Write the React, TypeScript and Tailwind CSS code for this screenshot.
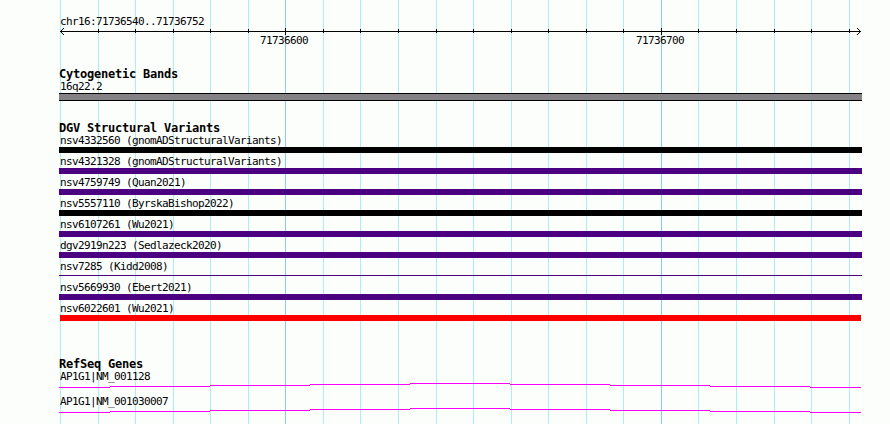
import { clsx } from "clsx"

const gridLines = [
  60, 98, 135, 173, 210, 248, 285, 323, 360, 398, 436, 473, 511, 548, 586, 623, 661, 698, 736, 774, 811, 849,
]

const majorLines = [285, 661]

const variants = [
  { name: "nsv4332560 (gnomADStructuralVariants)", bar: "bg-black" },
  { name: "nsv4321328 (gnomADStructuralVariants)", bar: "bg-[#4b0082]" },
  { name: "nsv4759749 (Quan2021)", bar: "bg-[#4b0082]" },
  { name: "nsv5557110 (ByrskaBishop2022)", bar: "bg-black" },
  { name: "nsv6107261 (Wu2021)", bar: "bg-[#4b0082]" },
  { name: "dgv2919n223 (Sedlazeck2020)", bar: "bg-[#4b0082]" },
  { name: "nsv7285 (Kidd2008)", bar: "bg-[#4b0082]", thin: true },
  { name: "nsv5669930 (Ebert2021)", bar: "bg-[#4b0082]" },
  { name: "nsv6022601 (Wu2021)", bar: "bg-[#ff0000]", inset: true },
]

const genes = ["AP1G1|NM_001128", "AP1G1|NM_001030007"]

// intron line, one pixel step per segment: [start, width, y]
const intron = [
  [0, 51, 4],
  [51, 100, 3],
  [151, 100, 2],
  [251, 100, 1],
  [351, 100, 0],
  [451, 100, 1],
  [551, 100, 2],
  [651, 100, 3],
  [751, 51, 4],
]

function Grid() {
  return (
    <svg className="absolute inset-0" width="890" height="424" shapeRendering="crispEdges">
      {gridLines.map((x) => (
        <rect key={x} x={x} y="0" width="1" height="424" fill={majorLines.includes(x) ? "#87ceeb" : "#afeeee"} />
      ))}
    </svg>
  )
}

function Ruler() {
  return (
    <svg className="-ml-[59px] block h-[6px] w-[890px] overflow-visible" shapeRendering="crispEdges">
      <rect x="60" y="3" width="801" height="1" />
      {gridLines.slice(1).map((x) =>
        majorLines.includes(x) ? (
          <rect key={x} x={x} y="0" width="1" height="7" />
        ) : (
          <rect key={x} x={x} y="1" width="1" height="4" />
        )
      )}
      {[1, 2, 3].map((d) => (
        <g key={d}>
          <rect x={60 + d} y={3 - d} width="1" height="1" />
          <rect x={60 + d} y={3 + d} width="1" height="1" />
          <rect x={860 - d} y={3 - d} width="1" height="1" />
          <rect x={860 - d} y={3 + d} width="1" height="1" />
        </g>
      ))}
    </svg>
  )
}

function Label({ children }: { children: string }) {
  return (
    <div className="h-[13px] pl-px text-[11px] leading-[13px] tracking-[-0.622px] whitespace-pre">{children}</div>
  )
}

function Heading({ children }: { children: string }) {
  return (
    <h2 className="h-3 text-[12px] leading-[12px] font-bold tracking-[-0.224px] whitespace-pre">{children}</h2>
  )
}

export default function App() {
  return (
    <div className="relative h-[424px] w-[890px] overflow-hidden bg-[#fcfefc] font-['DejaVu_Sans_Mono',monospace] text-black">
      <Grid />
      <main className="relative ml-[59px] w-[803px] pt-[15px]">
        <Label>chr16:71736540..71736752</Label>
        <Ruler />
        <div className="flex pl-[200px]">
          <Label>71736600</Label>
          <div className="ml-[327px]">
            <Label>71736700</Label>
          </div>
        </div>

        <section className="mt-[21px]">
          <Heading>Cytogenetic Bands</Heading>
          <Label>16q22.2</Label>
          <div className="h-2 border-y border-black bg-[#848284]" />
        </section>

        <section className="mt-[21px]">
          <Heading>DGV Structural Variants</Heading>
          {variants.map((v) => (
            <div key={v.name} className="h-[21px]">
              <Label>{v.name}</Label>
              <div className={clsx(v.bar, v.thin ? "mt-0.5 h-px" : "h-1.5", v.inset && "mx-px")} />
            </div>
          ))}
        </section>

        <section className="mt-[35px]">
          <Heading>RefSeq Genes</Heading>
          {genes.map((name) => (
            <div key={name} className="h-[25px]">
              <Label>{name}</Label>
              <svg className="block" width="803" height="5" shapeRendering="crispEdges">
                {intron.map(([x, width, y]) => (
                  <rect key={x} x={x} y={y} width={width} height="1" fill="#ff00ff" />
                ))}
              </svg>
            </div>
          ))}
        </section>
      </main>
    </div>
  )
}
